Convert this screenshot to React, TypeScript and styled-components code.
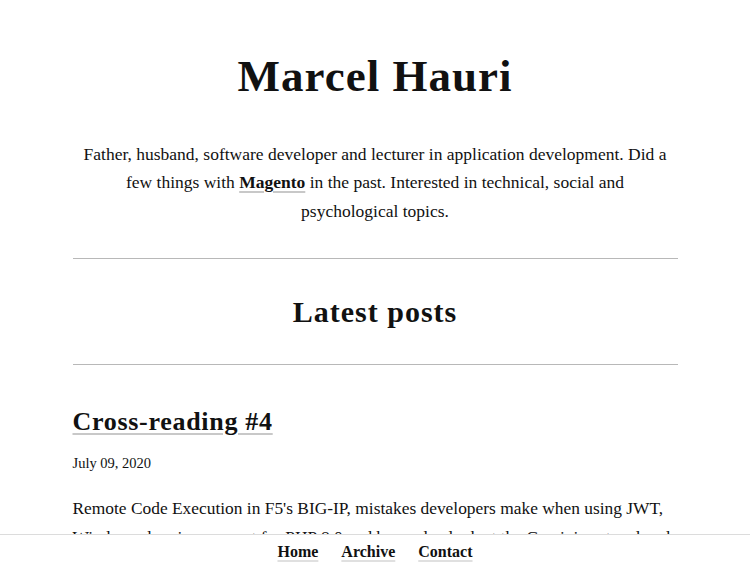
import * as React from 'react'
import styled, { createGlobalStyle } from 'styled-components'

const GlobalStyle = createGlobalStyle`
  html, body {
    margin: 0;
    padding: 0;
    background: #fff;
  }
  body {
    font-family: 'Liberation Serif', 'Times New Roman', serif;
    color: #111;
    font-size: 17.4px;
    line-height: 1.7;
  }
`

const Page = styled.main`
  width: 605px;
  margin: 0 auto;
  padding: 52px 0 80px;
`

const Intro = styled.header`
  text-align: center;
`

const Title = styled.h1`
  margin: 0;
  font-size: 45px;
  font-weight: 700;
  line-height: 1.1;
  letter-spacing: 1px;
`

const Bio = styled.p`
  max-width: 592px;
  margin: 38px auto 0;
  font-size: 17.5px;
  line-height: 28.5px;
`

const TextLink = styled.a`
  color: #111;
  font-weight: 700;
  text-decoration: underline;
  text-decoration-color: #c8c8c8;
  text-decoration-thickness: 2px;
  text-underline-offset: 3px;
`

const Rule = styled.hr<{ $top: number }>`
  border: 0;
  border-top: 1.5px solid #b8b8b8;
  margin: ${({ $top }) => $top}px 0 0;
`

const SectionTitle = styled.h2`
  margin: 35px 0 34px;
  text-align: center;
  font-size: 30px;
  font-weight: 700;
  line-height: 1.2;
  letter-spacing: 1px;
`

const Post = styled.article`
  margin-top: 41px;
`

const PostTitle = styled.h3`
  margin: 0;
  font-size: 26px;
  font-weight: 700;
  line-height: 1.2;
  letter-spacing: 0.7px;
`

const PostDate = styled.p`
  margin: 14px 0 0;
  font-size: 14.5px;
`

const Excerpt = styled.p`
  margin: 18px 0 0;
  font-size: 17.4px;
  line-height: 29px;
`

const Footer = styled.footer`
  position: fixed;
  left: 0;
  right: 0;
  bottom: 0;
  height: 29px;
  box-sizing: border-box;
  padding-top: 6px;
  background: #fff;
  border-top: 1px solid #dcdcdc;
  display: flex;
  justify-content: center;
  align-items: center;
  gap: 23px;
`

const NavLink = styled(TextLink)`
  font-size: 16px;
  line-height: 1;
  text-decoration-thickness: 1.5px;
  text-underline-offset: 3px;
  text-decoration-color: #e0e0e0;
`

const App: React.FC = () => {
  return (
    <>
      <GlobalStyle />
      <Page>
        <Intro>
          <Title>Marcel Hauri</Title>
          <Bio>
            Father, husband, software developer and lecturer in application
            development. Did a few things with <TextLink href="#">Magento</TextLink> in
            the past. Interested in technical, social and psychological topics.
          </Bio>
        </Intro>
        <Rule $top={33} />
        <SectionTitle>Latest posts</SectionTitle>
        <Rule $top={0} />
        <Post>
          <PostTitle>
            <TextLink href="#">Cross-reading #4</TextLink>
          </PostTitle>
          <PostDate>July 09, 2020</PostDate>
          <Excerpt>
            Remote Code Execution in F5's BIG-IP, mistakes developers make when
            using JWT, Windows drawing support for PHP 8.0 and beyond, a look at
            the Gemini protocol and more.
          </Excerpt>
        </Post>
      </Page>
      <Footer>
        <NavLink href="#">Home</NavLink>
        <NavLink href="#">Archive</NavLink>
        <NavLink href="#">Contact</NavLink>
      </Footer>
    </>
  )
}

export default App
